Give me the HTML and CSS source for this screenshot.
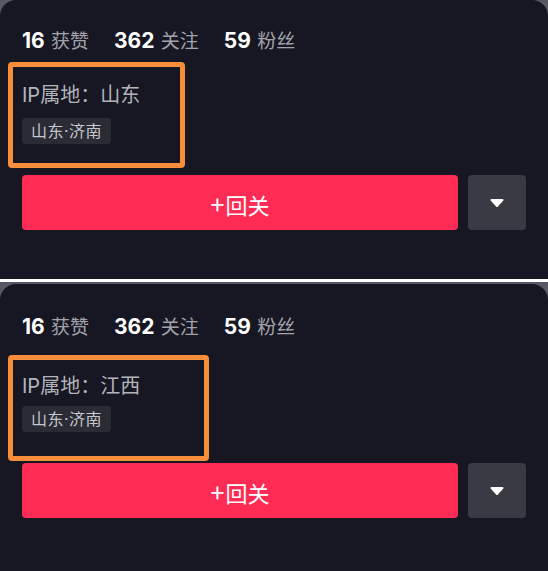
FILE: index.html
```html
<!DOCTYPE html>
<html lang="zh-CN">
<head>
    <meta charset="UTF-8">
    <meta name="viewport" content="width=device-width, initial-scale=1.0">
    <title>IP属地</title>
    <link rel="stylesheet" href="styles.css">
</head>
<body>
    <div class="shot">
        <div class="panel">
            <div class="stats">
                <span class="stat"><b>16</b> 获赞</span>
                <span class="stat"><b>362</b> 关注</span>
                <span class="stat"><b>59</b> 粉丝</span>
            </div>
            <p class="ip">IP属地：山东</p>
            <span class="tag">山东·济南</span>
            <div class="actions">
                <button class="follow"><span class="plus">+</span>回关</button>
                <button class="more">
                    <svg width="14" height="10" viewBox="0 0 14 10"><path d="M1.5 1h11c.9 0 1.3.9.8 1.6l-5.5 6.2c-.4.4-1.2.4-1.6 0L.7 2.6C.2 1.9.6 1 1.5 1z" fill="#fff"/></svg>
                </button>
            </div>
            <div class="mark mark-first"></div>
        </div>
    </div>

    <div class="divider"></div>

    <div class="shot shot-second">
        <div class="panel">
            <div class="stats">
                <span class="stat"><b>16</b> 获赞</span>
                <span class="stat"><b>362</b> 关注</span>
                <span class="stat"><b>59</b> 粉丝</span>
            </div>
            <p class="ip">IP属地：江西</p>
            <span class="tag">山东·济南</span>
            <div class="actions">
                <button class="follow"><span class="plus">+</span>回关</button>
                <button class="more">
                    <svg width="14" height="10" viewBox="0 0 14 10"><path d="M1.5 1h11c.9 0 1.3.9.8 1.6l-5.5 6.2c-.4.4-1.2.4-1.6 0L.7 2.6C.2 1.9.6 1 1.5 1z" fill="#fff"/></svg>
                </button>
            </div>
            <div class="mark mark-second"></div>
        </div>
    </div>
</body>
</html>
```

FILE: styles.css
```css
body {
    margin: 0;
    background-color: #161722;
    font-family: Inter, "Noto Sans CJK SC", sans-serif;
}

.shot {
    background-color: #565962;
}

.shot-second {
    padding-top: 2px;
}

.divider {
    height: 3px;
    background-color: #ffffff;
}

.panel {
    position: relative;
    background-color: #161722;
    border-radius: 16px 16px 0 0;
    padding: 27px 22px 49px;
}

.shot-second .panel {
    padding-top: 29px;
    padding-bottom: 46px;
}

.stats {
    display: flex;
    gap: 25px;
    height: 28px;
    line-height: 28px;
    font-size: 19px;
    color: #a2a3aa;
}

.stat b {
    font-size: 21px;
    font-weight: 700;
    color: #ffffff;
    margin-right: 1px;
}

.ip {
    margin: 27px 0 0;
    height: 26px;
    line-height: 26px;
    font-size: 20px;
    color: #b3b4ba;
}

.shot-second .ip {
    margin-top: 32px;
}

.tag {
    display: inline-block;
    margin-top: 10px;
    height: 26px;
    line-height: 26px;
    padding: 0 9px;
    border-radius: 4px;
    background-color: #2a2b34;
    color: #c6c7cc;
    font-size: 16px;
    letter-spacing: 0.5px;
}

.shot-second .tag {
    margin-top: 7px;
}

.actions {
    display: flex;
    gap: 10px;
    margin-top: 31px;
    height: 55px;
}

.follow {
    flex: 1;
    border: none;
    border-radius: 4px;
    background-color: #fe2c55;
    color: #ffffff;
    font-family: "Noto Sans CJK SC", sans-serif;
    font-size: 22px;
}

.plus {
    font-size: 25px;
    margin-right: 1px;
}

.more {
    width: 58px;
    border: none;
    border-radius: 4px;
    background-color: #393a44;
    display: flex;
    align-items: center;
    justify-content: center;
    padding: 0;
}

.mark {
    position: absolute;
    left: 8px;
    width: 167px;
    height: 96px;
    border: 5px solid #f68e3c;
    border-radius: 4px;
}

.mark-first {
    top: 62px;
}

.mark-second {
    top: 71px;
    width: 191px;
}
```
